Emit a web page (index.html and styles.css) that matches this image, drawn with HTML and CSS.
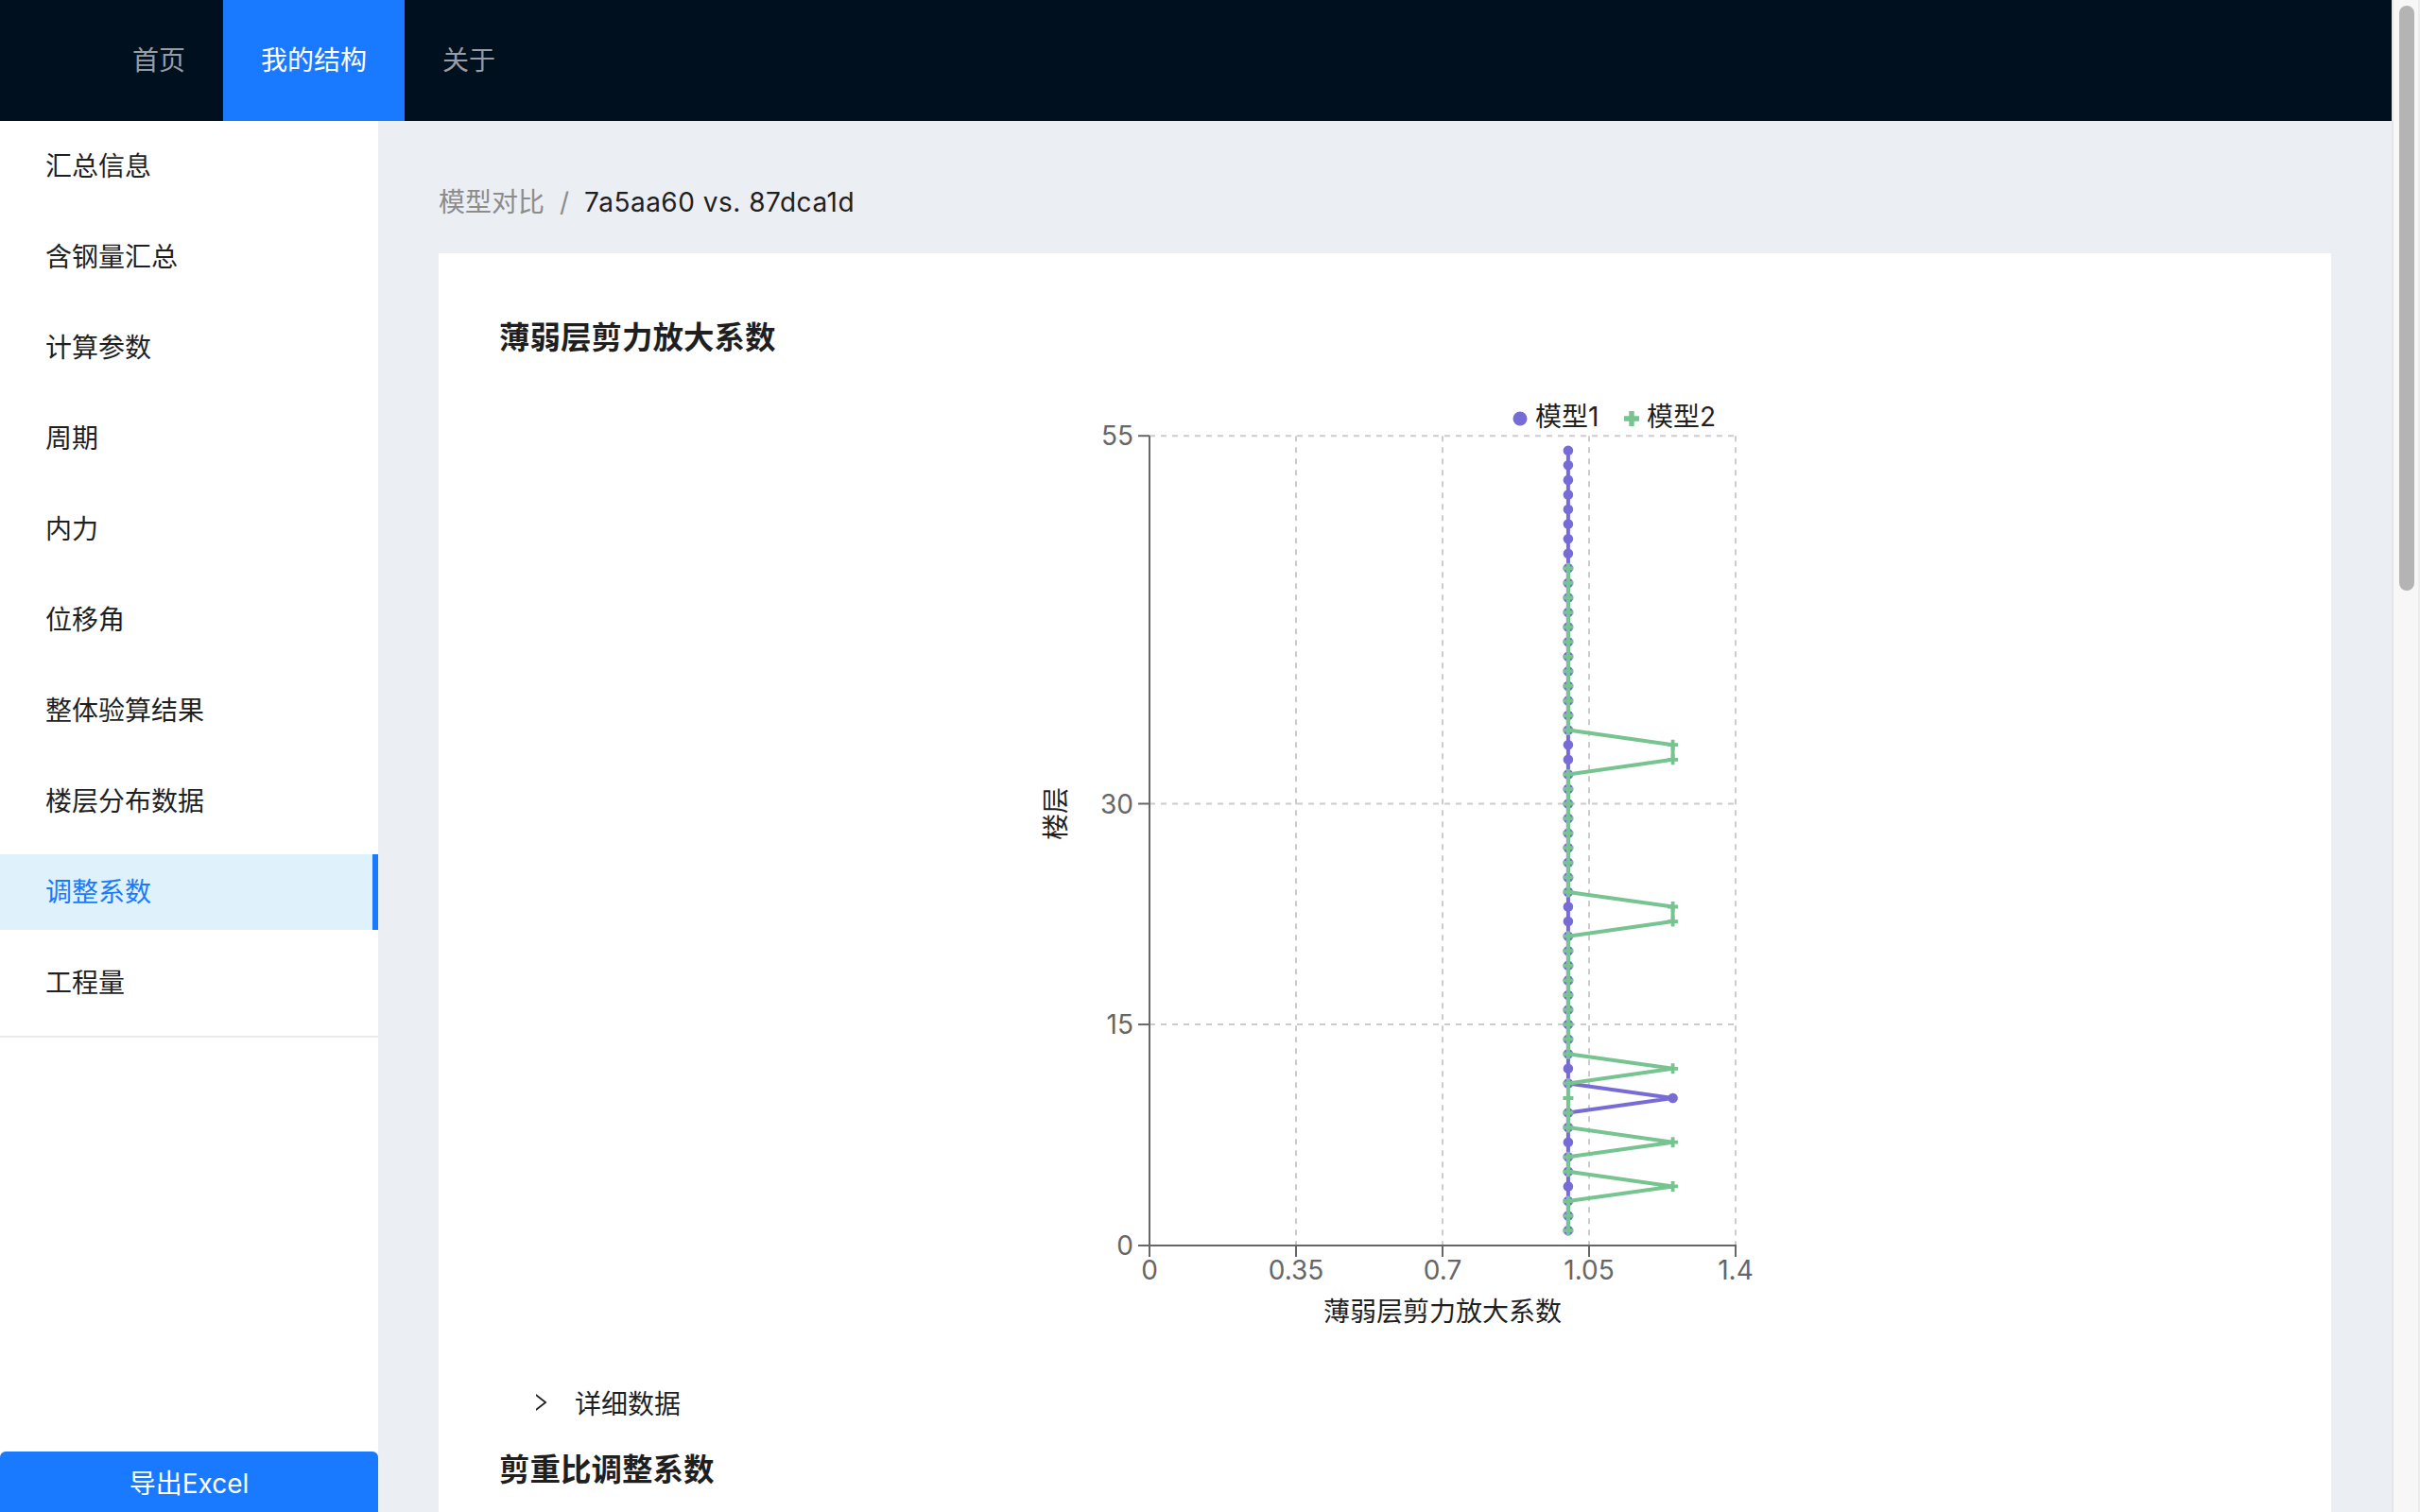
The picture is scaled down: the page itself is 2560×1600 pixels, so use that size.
FILE: index.html
```html
<!DOCTYPE html>
<html lang="zh-CN">
<head>
<meta charset="utf-8">
<title>调整系数</title>
<link rel="stylesheet" href="styles.css">
</head>
<body>
<div class="app">
  <div class="page">
    <header class="topbar">
      <nav class="topnav">
        <a class="nav-item">首页</a>
        <a class="nav-item active">我的结构</a>
        <a class="nav-item">关于</a>
      </nav>
    </header>
    <div class="body">
      <aside class="sider">
        <ul class="side-menu">
          <li class="side-item">汇总信息</li>
          <li class="side-item">含钢量汇总</li>
          <li class="side-item">计算参数</li>
          <li class="side-item">周期</li>
          <li class="side-item">内力</li>
          <li class="side-item">位移角</li>
          <li class="side-item">整体验算结果</li>
          <li class="side-item">楼层分布数据</li>
          <li class="side-item selected">调整系数</li>
          <li class="side-item">工程量</li>
        </ul>
        <div class="sider-spacer"></div>
        <button class="export-btn">导出Excel</button>
      </aside>
      <main class="content">
        <div class="breadcrumb">
          <span class="crumb-link">模型对比</span>
          <span class="crumb-sep">/</span>
          <span class="crumb-current">7a5aa60 vs. 87dca1d</span>
        </div>
        <section class="card">
          <h3 class="card-title">薄弱层剪力放大系数</h3>
          <svg class="chart" width="1874" height="1057" viewBox="528 382 1874 1057" xmlns="http://www.w3.org/2000/svg">
            <defs>
              <circle id="dot" r="5.3"/>
              <path id="crs" d="M-1.9,-5.5h3.8v3.6h3.6v3.8h-3.6v3.6h-3.8v-3.6h-3.6v-3.8h3.6z"/>
            </defs>
            <!-- legend -->
            <g class="legend">
              <circle cx="1608" cy="443" r="7.5" class="c-purple"/>
              <text x="1624" y="441" class="legend-text">模型1</text>
              <path transform="translate(1726 443)" d="M-2.7,-8h5.4v5.3h5.3v5.4h-5.3v5.3h-5.4v-5.3h-5.3v-5.4h5.3z" class="c-green"/>
              <text x="1742" y="441" class="legend-text">模型2</text>
            </g>
            <!-- grid -->
            <g class="grid">
              <line x1="1216" y1="461.2" x2="1836" y2="461.2"/>
              <line x1="1216" y1="850.5" x2="1836" y2="850.5"/>
              <line x1="1216" y1="1084.1" x2="1836" y2="1084.1"/>
              <line x1="1371" y1="461.2" x2="1371" y2="1318"/>
              <line x1="1526" y1="461.2" x2="1526" y2="1318"/>
              <line x1="1681" y1="461.2" x2="1681" y2="1318"/>
              <line x1="1836" y1="461.2" x2="1836" y2="1318"/>
            </g>
            <!-- axes -->
            <g class="axis">
              <line x1="1216" y1="461.2" x2="1216" y2="1318"/>
              <line x1="1204" y1="461.2" x2="1216" y2="461.2"/>
              <line x1="1204" y1="850.5" x2="1216" y2="850.5"/>
              <line x1="1204" y1="1084.1" x2="1216" y2="1084.1"/>
              <line x1="1204" y1="1318" x2="1216" y2="1318"/>
              <line x1="1215" y1="1318" x2="1837" y2="1318"/>
              <line x1="1216" y1="1318" x2="1216" y2="1330"/>
              <line x1="1371" y1="1318" x2="1371" y2="1330"/>
              <line x1="1526" y1="1318" x2="1526" y2="1330"/>
              <line x1="1681" y1="1318" x2="1681" y2="1330"/>
              <line x1="1836" y1="1318" x2="1836" y2="1330"/>
            </g>
            <g class="tick-y">
              <text x="1199" y="461.2">55</text>
              <text x="1199" y="850.5">30</text>
              <text x="1199" y="1084.1">15</text>
              <text x="1199" y="1318">0</text>
            </g>
            <g class="tick-x">
              <text x="1216" y="1344">0</text>
              <text x="1371" y="1344">0.35</text>
              <text x="1526" y="1344">0.7</text>
              <text x="1681" y="1344">1.05</text>
              <text x="1836" y="1344">1.4</text>
            </g>
            <text class="axis-label" x="1526" y="1388">薄弱层剪力放大系数</text>
            <text class="axis-label" transform="translate(1117 861) rotate(-90)" x="0" y="0">楼层</text>

            <!-- series 1 -->
            <g class="series-purple">
              <polyline class="s-line" points="1658.9,1302.1 1658.9,1177.5 1769.6,1162.0 1658.9,1146.4 1658.9,476.8"/>
              <use href="#dot" x="1658.9" y="1302.1"/>
              <use href="#dot" x="1658.9" y="1286.6"/>
              <use href="#dot" x="1658.9" y="1271.0"/>
              <use href="#dot" x="1658.9" y="1255.4"/>
              <use href="#dot" x="1658.9" y="1239.8"/>
              <use href="#dot" x="1658.9" y="1224.3"/>
              <use href="#dot" x="1658.9" y="1208.7"/>
              <use href="#dot" x="1658.9" y="1193.1"/>
              <use href="#dot" x="1658.9" y="1177.5"/>
              <use href="#dot" x="1769.6" y="1162.0"/>
              <use href="#dot" x="1658.9" y="1146.4"/>
              <use href="#dot" x="1658.9" y="1130.8"/>
              <use href="#dot" x="1658.9" y="1115.3"/>
              <use href="#dot" x="1658.9" y="1099.7"/>
              <use href="#dot" x="1658.9" y="1084.1"/>
              <use href="#dot" x="1658.9" y="1068.5"/>
              <use href="#dot" x="1658.9" y="1053.0"/>
              <use href="#dot" x="1658.9" y="1037.4"/>
              <use href="#dot" x="1658.9" y="1021.8"/>
              <use href="#dot" x="1658.9" y="1006.2"/>
              <use href="#dot" x="1658.9" y="990.7"/>
              <use href="#dot" x="1658.9" y="975.1"/>
              <use href="#dot" x="1658.9" y="959.5"/>
              <use href="#dot" x="1658.9" y="943.9"/>
              <use href="#dot" x="1658.9" y="928.4"/>
              <use href="#dot" x="1658.9" y="912.8"/>
              <use href="#dot" x="1658.9" y="897.2"/>
              <use href="#dot" x="1658.9" y="881.7"/>
              <use href="#dot" x="1658.9" y="866.1"/>
              <use href="#dot" x="1658.9" y="850.5"/>
              <use href="#dot" x="1658.9" y="834.9"/>
              <use href="#dot" x="1658.9" y="819.4"/>
              <use href="#dot" x="1658.9" y="803.8"/>
              <use href="#dot" x="1658.9" y="788.2"/>
              <use href="#dot" x="1658.9" y="772.6"/>
              <use href="#dot" x="1658.9" y="757.1"/>
              <use href="#dot" x="1658.9" y="741.5"/>
              <use href="#dot" x="1658.9" y="725.9"/>
              <use href="#dot" x="1658.9" y="710.4"/>
              <use href="#dot" x="1658.9" y="694.8"/>
              <use href="#dot" x="1658.9" y="679.2"/>
              <use href="#dot" x="1658.9" y="663.6"/>
              <use href="#dot" x="1658.9" y="648.1"/>
              <use href="#dot" x="1658.9" y="632.5"/>
              <use href="#dot" x="1658.9" y="616.9"/>
              <use href="#dot" x="1658.9" y="601.3"/>
              <use href="#dot" x="1658.9" y="585.8"/>
              <use href="#dot" x="1658.9" y="570.2"/>
              <use href="#dot" x="1658.9" y="554.6"/>
              <use href="#dot" x="1658.9" y="539.0"/>
              <use href="#dot" x="1658.9" y="523.5"/>
              <use href="#dot" x="1658.9" y="507.9"/>
              <use href="#dot" x="1658.9" y="492.3"/>
              <use href="#dot" x="1658.9" y="476.8"/>
            </g>
            <!-- series 2 -->
            <g class="series-green">
              <polyline class="s-line" points="1658.9,1302.1 1658.9,1271.0 1769.6,1255.4 1658.9,1239.8 1658.9,1224.3 1769.6,1208.7 1658.9,1193.1 1658.9,1146.4 1769.6,1130.8 1658.9,1115.3 1658.9,990.7 1769.6,975.1 1769.6,959.5 1658.9,943.9 1658.9,819.4 1769.6,803.8 1769.6,788.2 1658.9,772.6 1658.9,601.3"/>
              <use href="#crs" x="1658.9" y="1302.1"/>
              <use href="#crs" x="1658.9" y="1286.6"/>
              <use href="#crs" x="1658.9" y="1271.0"/>
              <use href="#crs" x="1769.6" y="1255.4"/>
              <use href="#crs" x="1658.9" y="1239.8"/>
              <use href="#crs" x="1658.9" y="1224.3"/>
              <use href="#crs" x="1769.6" y="1208.7"/>
              <use href="#crs" x="1658.9" y="1193.1"/>
              <use href="#crs" x="1658.9" y="1177.5"/>
              <use href="#crs" x="1658.9" y="1162.0"/>
              <use href="#crs" x="1658.9" y="1146.4"/>
              <use href="#crs" x="1769.6" y="1130.8"/>
              <use href="#crs" x="1658.9" y="1115.3"/>
              <use href="#crs" x="1658.9" y="1099.7"/>
              <use href="#crs" x="1658.9" y="1084.1"/>
              <use href="#crs" x="1658.9" y="1068.5"/>
              <use href="#crs" x="1658.9" y="1053.0"/>
              <use href="#crs" x="1658.9" y="1037.4"/>
              <use href="#crs" x="1658.9" y="1021.8"/>
              <use href="#crs" x="1658.9" y="1006.2"/>
              <use href="#crs" x="1658.9" y="990.7"/>
              <use href="#crs" x="1769.6" y="975.1"/>
              <use href="#crs" x="1769.6" y="959.5"/>
              <use href="#crs" x="1658.9" y="943.9"/>
              <use href="#crs" x="1658.9" y="928.4"/>
              <use href="#crs" x="1658.9" y="912.8"/>
              <use href="#crs" x="1658.9" y="897.2"/>
              <use href="#crs" x="1658.9" y="881.7"/>
              <use href="#crs" x="1658.9" y="866.1"/>
              <use href="#crs" x="1658.9" y="850.5"/>
              <use href="#crs" x="1658.9" y="834.9"/>
              <use href="#crs" x="1658.9" y="819.4"/>
              <use href="#crs" x="1769.6" y="803.8"/>
              <use href="#crs" x="1769.6" y="788.2"/>
              <use href="#crs" x="1658.9" y="772.6"/>
              <use href="#crs" x="1658.9" y="757.1"/>
              <use href="#crs" x="1658.9" y="741.5"/>
              <use href="#crs" x="1658.9" y="725.9"/>
              <use href="#crs" x="1658.9" y="710.4"/>
              <use href="#crs" x="1658.9" y="694.8"/>
              <use href="#crs" x="1658.9" y="679.2"/>
              <use href="#crs" x="1658.9" y="663.6"/>
              <use href="#crs" x="1658.9" y="648.1"/>
              <use href="#crs" x="1658.9" y="632.5"/>
              <use href="#crs" x="1658.9" y="616.9"/>
              <use href="#crs" x="1658.9" y="601.3"/>
            </g>
          </svg>
          <div class="collapse-header">
            <svg class="chev" width="24" height="24" viewBox="0 0 1024 1024" xmlns="http://www.w3.org/2000/svg"><path d="M765.7 486.8L314.9 134.7A7.97 7.97 0 00302 141v77.3c0 4.9 2.3 9.6 6.1 12.6l360 281.1-360 281.1c-3.9 3-6.1 7.7-6.1 12.6V883c0 6.7 7.7 10.4 12.9 6.3l450.8-352.1a31.96 31.96 0 000-50.4z"/></svg>
            <span class="collapse-title">详细数据</span>
          </div>
          <h3 class="card-title second">剪重比调整系数</h3>
        </section>
      </main>
    </div>
  </div>
  <div class="scrollbar"><div class="thumb"></div></div>
</div>
</body>
</html>
```

FILE: styles.css
```css
html, body {
  margin: 0;
  padding: 0;
  width: 2560px;
  height: 1600px;
  overflow: hidden;
  background: #ebeef3;
  font-family: Inter, "Noto Sans CJK SC", sans-serif;
  color: #1f1f1f;
}

.app {
  display: flex;
  width: 2560px;
  height: 1600px;
}

.page {
  width: 2530px;
  height: 1600px;
  display: flex;
  flex-direction: column;
  overflow: hidden;
}

.topbar {
  height: 128px;
  flex: 0 0 128px;
  background: #00101f;
  padding: 0 100px;
  display: flex;
}

.topnav {
  display: flex;
}

.nav-item {
  display: block;
  padding: 0 40px;
  line-height: 128px;
  font-size: 28px;
  color: rgba(255, 255, 255, 0.6);
}

.nav-item.active {
  background: #1a7aff;
  color: #ffffff;
}

.body {
  flex: 1;
  display: flex;
  min-height: 0;
}

.sider {
  width: 400px;
  flex: 0 0 400px;
  background: #ffffff;
  display: flex;
  flex-direction: column;
}

.side-menu {
  list-style: none;
  margin: 0;
  padding: 8px 0 16px;
  display: flex;
  flex-direction: column;
  gap: 16px;
  border-bottom: 2px solid #ebebeb;
}

.side-item {
  height: 80px;
  line-height: 80px;
  padding-left: 48px;
  font-size: 28px;
  color: #1f1f1f;
}

.side-item.selected {
  background: #dff2fc;
  color: #1a7aff;
  box-shadow: inset -6px 0 0 #1a7aff;
}

.sider-spacer {
  flex: 1;
}

.export-btn {
  height: 64px;
  width: 400px;
  border: none;
  border-radius: 6px 6px 0 0;
  background: #1a7aff;
  color: #ffffff;
  font-family: Inter, "Noto Sans CJK SC", sans-serif;
  font-size: 28px;
  padding: 0;
}

.content {
  flex: 1;
  background: #ebeef3;
  padding: 64px 64px 0;
  overflow: hidden;
}

.breadcrumb {
  font-size: 28px;
  line-height: 44px;
  margin-bottom: 32px;
  display: flex;
}

.crumb-link,
.crumb-sep {
  color: #8c8c8c;
}

.crumb-sep {
  margin: 0 16px;
}

.crumb-current {
  color: #1f1f1f;
  letter-spacing: 0.5px;
}

.card {
  background: #ffffff;
  padding: 66px 64px 0;
  height: 1400px;
}

.card-title {
  margin: 0;
  font-size: 32.5px;
  line-height: 48px;
  font-weight: 600;
  color: #1f1f1f;
}

.card-title.second {
  margin-top: 3px;
}

.chart {
  display: block;
}

.chart text {
  font-family: Inter, "Noto Sans CJK SC", sans-serif;
}

.legend-text {
  font-size: 28px;
  fill: #1f1f1f;
  dominant-baseline: central;
}

.c-purple { fill: #776cd6; }
.c-green { fill: #77c491; }

.grid line {
  stroke: #cccccc;
  stroke-width: 2;
  stroke-dasharray: 6 6;
}

.axis line {
  stroke: #666666;
  stroke-width: 2;
}

.tick-y text {
  font-size: 28px;
  fill: #666666;
  text-anchor: end;
  dominant-baseline: central;
}

.tick-x text {
  font-size: 28px;
  fill: #666666;
  text-anchor: middle;
  dominant-baseline: central;
}

.axis-label {
  font-size: 28px;
  fill: #1f1f1f;
  text-anchor: middle;
  dominant-baseline: central;
}

.s-line {
  fill: none;
  stroke-width: 4;
}

.series-purple .s-line { stroke: #776cd6; }
.series-purple use { fill: #776cd6; }
.series-green .s-line { stroke: #77c491; }
.series-green use { fill: #77c491; }

.collapse-header {
  height: 90px;
  display: flex;
  align-items: center;
  padding-left: 32px;
  gap: 24px;
}

.chev {
  display: block;
  fill: #1f1f1f;
}

.collapse-title {
  font-size: 28px;
  color: #1f1f1f;
}

.scrollbar {
  width: 30px;
  flex: 0 0 30px;
  height: 1600px;
  box-sizing: border-box;
  background: #f7f7f7;
  border-left: 2px solid #e6e6e6;
  border-right: 2px solid #ececec;
  padding: 6px 4px 0 6px;
}

.thumb {
  width: 16px;
  height: 619px;
  border-radius: 8px;
  background: #b4b4b4;
}
```
